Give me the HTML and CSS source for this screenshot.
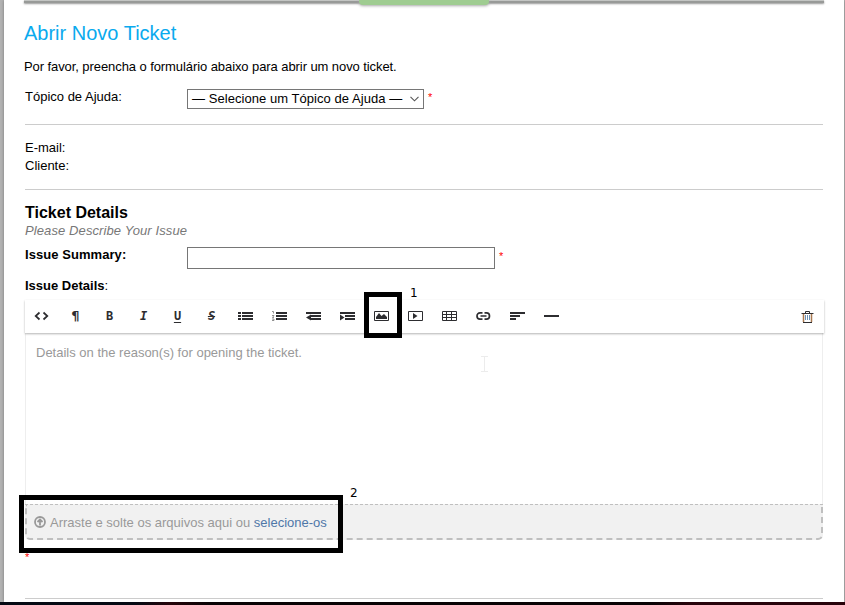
FILE: index.html
```html
<!DOCTYPE html>
<html lang="pt-BR">
<head>
<meta charset="utf-8">
<title>Abrir Novo Ticket</title>
<link rel="stylesheet" href="styles.css">
</head>
<body>
<main class="page">
  <nav class="nav"><span class="tab"></span></nav>
  <h1 class="title"><span>Abrir Novo Ticket</span></h1>
  <p class="intro"><span>Por favor, preencha o formulário abaixo para abrir um novo ticket.</span></p>
  <div class="row topic">
    <label class="label">Tópico de Ajuda:</label>
    <div class="select"><span>— Selecione um Tópico de Ajuda —</span><svg width="9" height="6" viewBox="0 0 9 6" fill="none" stroke="#555" stroke-width="1.1"><path d="M.5 .8 4.5 4.8 8.5 .8"/></svg></div>
    <span class="required">*</span>
  </div>
  <section class="user">
    <div>E-mail:</div>
    <div>Cliente:</div>
  </section>
  <section class="details">
    <h2 class="heading"><span>Ticket Details</span></h2>
    <div class="hint"><span>Please Describe Your Issue</span></div>
    <div class="row summary">
      <label class="label strong">Issue Summary:</label>
      <input class="input" type="text">
      <span class="required">*</span>
    </div>
    <div class="issue"><b>Issue Details</b>:</div>
    <div class="toolbar">
      <span class="tool"><svg viewBox="0 0 14 14"><path class="line" d="M5.500 3.500 1.700 7l3.800 3.500M9.500 3.500 13.300 7l-3.800 3.500"/></svg></span>
      <span class="tool para">¶</span>
      <span class="tool glyph">B</span>
      <span class="tool glyph slant">I</span>
      <span class="tool glyph under">U</span>
      <span class="tool glyph strike">S</span>
      <span class="tool"><svg viewBox="0 0 14 14"><path d="M0 3h3v2H0zM0 6h3v2H0zM0 9h3v2H0zM4 3h11v2H4zM4 6h11v2H4zM4 9h11v2H4z"/></svg></span>
      <span class="tool"><svg viewBox="0 0 14 14"><path d="M4 3h11v2H4zM4 6h11v2H4zM4 9h11v2H4z"/><path class="thin" d="M0 2.500h1.500v2M0 6.500h2L.5 8.500H2M0 10h2v1.500H0"/></svg></span>
      <span class="tool"><svg viewBox="0 0 14 14"><path d="M0 3h15v2H0zM5 6h10v2H5zM5 9h10v2H5zM5 5.500v6L0 8.500z"/></svg></span>
      <span class="tool"><svg viewBox="0 0 14 14"><path d="M0 3h15v2H0zM5 6h10v2H5zM5 9h10v2H5zM0 5.500l4.500 3-4.500 3z"/></svg></span>
      <span class="tool marked"><svg viewBox="0 0 14 14"><path class="frame" d="M.5 2.500h14v9H.5z"/><path d="M2 10V8l3-4 2.500 3L10 5l3 3v2z"/></svg><span class="callout"></span><span class="number one">1</span></span>
      <span class="tool"><svg viewBox="0 0 14 14"><path class="frame" d="M.5 2.500h14v9H.5z"/><path d="m5 4 4.500 3L5 10z"/></svg></span>
      <span class="tool"><svg viewBox="0 0 14 14"><path class="frame" d="M.5 2.500h14v9H.5zM0 5.500h14M0 8.500h14M4.500 2v10M9.500 2v10"/></svg></span>
      <span class="tool"><svg viewBox="0 0 14 14"><path class="line" d="M6.500 3.800H4a3 3.200 0 0 0 0 6.400h2.500M8.500 3.800h2a3 3.200 0 0 1 0 6.400h-2M4.500 7h6"/></svg></span>
      <span class="tool"><svg viewBox="0 0 14 14"><path d="M0 3h15v2H0zM0 6h10v2H0zM0 9h6v2H0z"/></svg></span>
      <span class="tool"><svg viewBox="0 0 14 14"><path d="M0 6h15v2H0z"/></svg></span>
      <span class="tool trash"><svg viewBox="0 0 14 14"><path class="brown" d="M3.500 4v9M11.500 4v9"/><path class="blue" d="M5.500 6v5M7.500 6v5M9.500 6v5"/><path class="frame" d="M1.500 4.500h12M3 13.500h9M5.500 4V2.500h4V4"/></svg></span>
    </div>
    <div class="editor"><span>Details on the reason(s) for opening the ticket.</span>
      <svg class="caret" width="7" height="16" viewBox="0 0 7 16" fill="none" stroke="#ececec"><path d="M0 .5h7M0 15.500h7M3.500 1v14"/></svg>
    </div>
    <div class="drop">
      <svg width="12" height="12" viewBox="0 0 12 12" fill="none" stroke="#999" stroke-width="1.8"><circle cx="6" cy="6" r="5"/><path d="M6 9.500V4M3.500 6 6 3.500 8.500 6"/></svg>
      <span class="dtext">Arraste e solte os arquivos aqui ou <a>selecione-os</a></span>
      <span class="callout"></span><span class="number two">2</span>
    </div>
    <div class="required end">*</div>
  </section>
</main>
<div class="taskbar"></div>
</body>
</html>
```
FILE: styles.css
```css
* { box-sizing: border-box; }
body {
  margin: 0;
  height: 605px;
  overflow: hidden;
  background: #b3b3b3;
  font: 13px/18px "Liberation Sans", Arial, sans-serif;
  color: #000;
}
.page {
  height: 602px;
  margin: 0 1px 0 4px;
  padding: 0 21px;
  background: #fff;
  box-shadow: 0 0 3px #777;
}
.nav {
  height: 3px;
  margin: 0 -1px;
  padding-left: 335px;
  background: linear-gradient(#c3c5c3 0 1px, #989a98 1px);
  box-shadow: 0 1px 2px #999;
}
.tab {
  display: block;
  width: 130px;
  height: 5px;
  border-radius: 0 0 4px 4px;
  background: #9fcc91;
  box-shadow: 0 1px 3px #aaa;
}
.title {
  margin: 17px 0 0 -1px;
  font-size: 20px;
  line-height: 26px;
  font-weight: normal;
  color: #0aaaee;
}
.intro { margin: 12px 0 0 -1px; letter-spacing: -.08px; }
.row { display: flex; }
.label { width: 162px; }
.strong, .issue b { font-weight: bold; }
.strong { letter-spacing: .06px; }
.required { color: #f00; font-size: 11px; }
.topic { margin-top: 12px; height: 37px; border-bottom: 1px solid #ccc; }
.select {
  display: flex;
  align-items: center;
  justify-content: space-between;
  width: 237px;
  height: 20px;
  margin-top: 1px;
  padding: 0 4px;
  border: 1px solid #767676;
  letter-spacing: .05px;
  white-space: nowrap;
}
.topic .required { margin-left: 4px; }
.user { height: 65px; padding-top: 14px; border-bottom: 1px solid #ccc; }
.details { height: 409px; padding-top: 14px; border-bottom: 1px solid #ccc; }
.heading { margin: 0; font-size: 16px; line-height: 18px; }
.hint { font-style: italic; color: #777; letter-spacing: .1px; }
.summary { margin-top: 6px; height: 31px; }
.input { width: 308px; height: 22px; margin-top: 1px; border: 1px solid #767676; }
.summary .required { margin-left: 4px; padding-top: 1px; }
.issue { height: 23px; }
.toolbar {
  display: flex;
  height: 33px;
  margin-right: -1px;
  box-shadow: 0 1px 2px rgba(0,0,0,.3);
  position: relative;
  z-index: 1;
}
.tool {
  display: flex;
  align-items: center;
  justify-content: center;
  width: 34px;
  height: 33px;
  padding: 0 1px 1px 0;
  color: #2d2d30;
}
.tool svg { width: 14px; height: 14px; margin: 0 1px 1px 0; overflow: visible; fill: #2d2d30; }
.tool .line { fill: none; stroke: #2d2d30; stroke-width: 1.7; }
.tool .frame { fill: none; stroke: #2d2d30; stroke-width: 1; }
.tool .thin { fill: none; stroke: #777; stroke-width: .8; }
.tool .brown { fill: none; stroke: #a87850; stroke-width: 1.5; }
.tool .blue { fill: none; stroke: #6b91b5; }
.glyph { font: bold 12px/32px "DejaVu Sans Mono", monospace; }
.para { font: bold 13px/32px "DejaVu Sans", sans-serif; }
.slant { font-style: italic; }
.under { text-decoration: underline; text-underline-offset: 2px; }
.strike { text-decoration: line-through; font-style: italic; }
.trash { margin-left: auto; }
.trash svg { margin: 0; }
.marked { position: relative; }
.callout { position: absolute; border: 5px solid #000; }
.marked .callout { left: -1px; top: -8px; width: 38px; height: 46px; }
.number { position: absolute; font: 12px/16px "DejaVu Sans", sans-serif; color: #000; }
.one { left: 45px; top: -15px; }
.editor {
  position: relative;
  height: 171px;
  padding: 11px 10px;
  border: 1px solid #eee;
  border-width: 0 1px;
  color: #999;
}
.caret { position: absolute; left: 455px; top: 23px; }
.drop {
  position: relative;
  display: flex;
  align-items: center;
  gap: 4px;
  height: 36px;
  padding: 2px 0 0 7px;
  border: 2px dashed #bfbfbf;
  border-top-width: 1px;
  border-radius: 0 0 5px 5px;
  background: #f1f1f1;
  color: #999;
}
.drop > svg { margin-top: -1px; }
.drop a { color: #4f77a8; }
.drop .callout { left: -8px; top: -10px; width: 324px; height: 58px; }
.two { left: 323px; top: -20px; }
.end { margin-top: 8px; }
.taskbar { height: 3px; background: linear-gradient(90deg, #050a14 0 135px, #26040a 170px, #080305 210px 650px, #28030b 690px); }
```
